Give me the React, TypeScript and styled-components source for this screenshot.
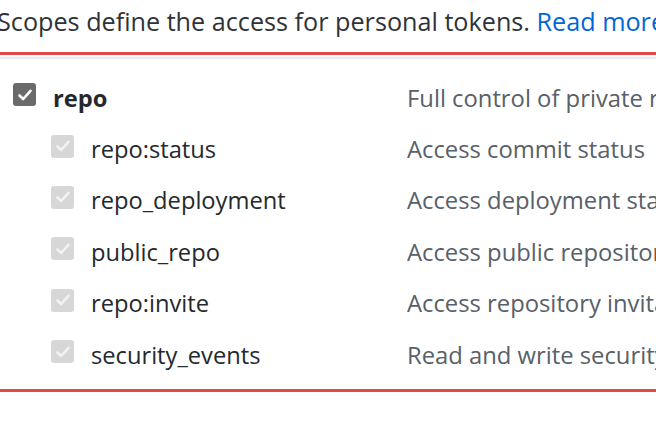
import React from "react";
import styled, { createGlobalStyle } from "styled-components";

const Global = createGlobalStyle`
  html, body { margin: 0; padding: 0; background: #ffffff; }
  body { font-family: "Open Sans", "Noto Sans", sans-serif; overflow: hidden; }
`;

const Page = styled.div`
  width: 656px;
  height: 446px;
  overflow: hidden;
  padding-top: 4px;
  box-sizing: border-box;
`;

const Intro = styled.p`
  margin: 0 0 0 -3px;
  font-size: 25.2px;
  line-height: 34px;
  color: #2f3337;
  white-space: nowrap;
`;

const Link = styled.a`
  color: #0366d6;
  text-decoration: none;
`;

const ScopeBox = styled.div`
  margin-top: 14px;
  border-top: 3px solid #e5484a;
  border-bottom: 3px solid #e5484a;
  padding-top: 2px;
  padding-bottom: 12px;
`;

const Table = styled.div`
  border-top: 2px solid #ebebeb;
  padding-top: 10px;
`;

const Row = styled.div<{ $sub?: boolean }>`
  display: grid;
  grid-template-columns: ${(p) => (p.$sub ? "51px 356px 1fr" : "13px 394px 1fr")};
  align-items: center;
  height: 51.4px;
`;

const Box = styled.span`
  grid-column: 2;
  display: flex;
  align-items: center;
  gap: 17px;
  white-space: nowrap;
`;

const Check = styled.span<{ $disabled?: boolean }>`
  width: 23px;
  height: 23px;
  border-radius: 3px;
  flex: none;
  display: flex;
  align-items: center;
  justify-content: center;
  background: ${(p) => (p.$disabled ? "#d7d7d7" : "#6a6a6a")};
`;

const Name = styled.span<{ $bold?: boolean }>`
  font-size: 23.7px;
  margin-top: 6px;
  color: #24292e;
  font-weight: ${(p) => (p.$bold ? 700 : 400)};
`;

const Desc = styled.span`
  grid-column: 3;
  font-size: 23.8px;
  margin-top: 6px;
  color: #586069;
  white-space: nowrap;
  overflow: hidden;
`;

const CheckMark: React.FC<{ color: string }> = ({ color }) => (
  <svg width="16" height="16" viewBox="0 0 16 16">
    <path d="M2.5 8.5 L6.2 12 L13.5 3.8" fill="none" stroke={color} strokeWidth="2.6" strokeLinecap="round" strokeLinejoin="round" />
  </svg>
);

const scopes = [
  { name: "repo:status", desc: "Access commit status" },
  { name: "repo_deployment", desc: "Access deployment status" },
  { name: "public_repo", desc: "Access public repositories" },
  { name: "repo:invite", desc: "Access repository invitations" },
  { name: "security_events", desc: "Read and write security events" },
];

export default function App() {
  return (
    <>
      <Global />
      <Page>
        <Intro>
          Scopes define the access for personal tokens. <Link href="#">Read more about OAuth scopes.</Link>
        </Intro>
        <ScopeBox>
          <Table>
            <Row>
              <Box>
                <Check>
                  <CheckMark color="#ffffff" />
                </Check>
                <Name $bold>repo</Name>
              </Box>
              <Desc>Full control of private repositories</Desc>
            </Row>
            {scopes.map((s) => (
              <Row key={s.name} $sub>
                <Box>
                  <Check $disabled>
                    <CheckMark color="#f2f2f2" />
                  </Check>
                  <Name>{s.name}</Name>
                </Box>
                <Desc>{s.desc}</Desc>
              </Row>
            ))}
          </Table>
        </ScopeBox>
      </Page>
    </>
  );
}
